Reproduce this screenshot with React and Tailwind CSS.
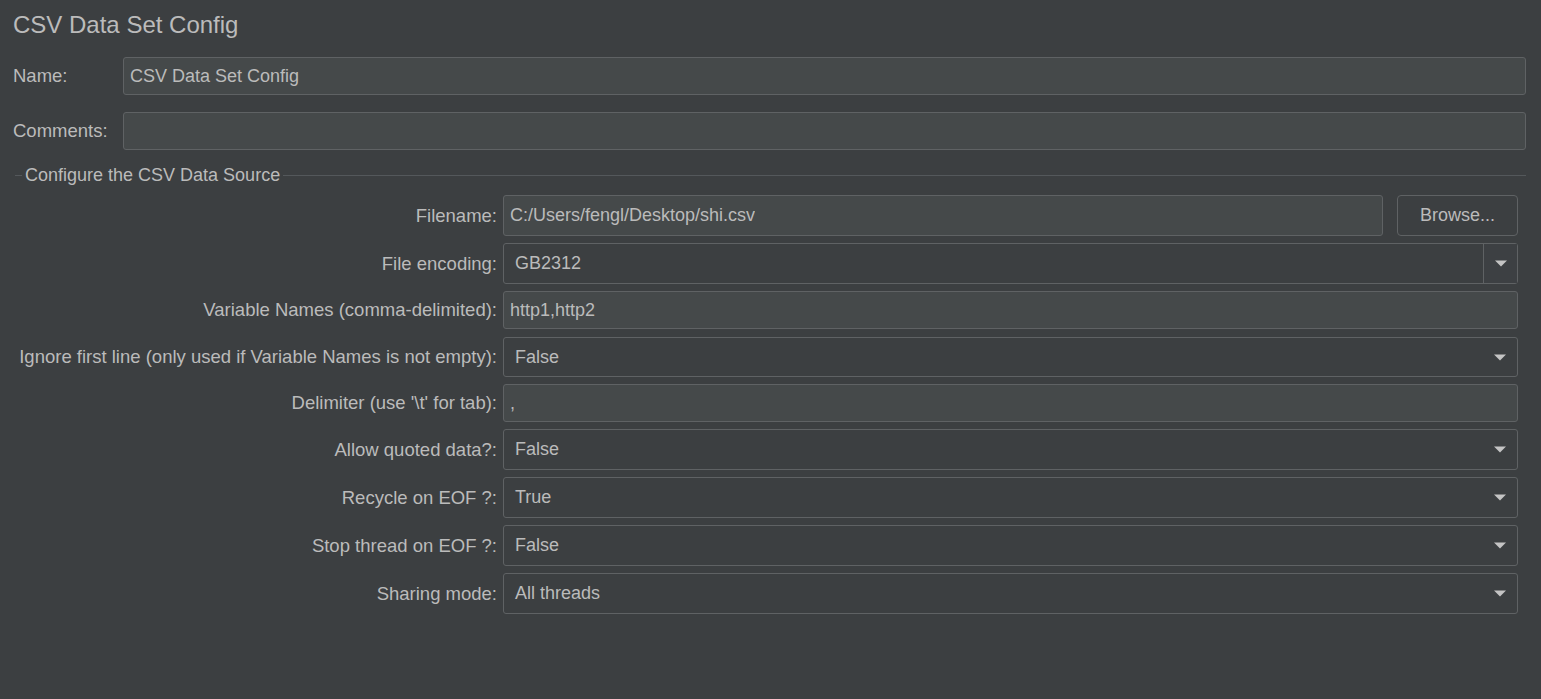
import { useState } from 'react';

const fieldText = 'text-[18px] text-[#bbbbbb]';
const labelText = 'text-[18.5px] text-[#bbbbbb]';

function TextField({ value, height, className = '' }) {
  return (
    <div
      className={`flex items-center rounded-[3px] border border-[#5f6264] bg-[#45494a] px-[6px] ${fieldText} ${className}`}
      style={{ height }}
    >
      <span className="truncate">{value}</span>
    </div>
  );
}

function Arrow() {
  return (
    <svg width="12" height="7" viewBox="0 0 12 7" className="shrink-0">
      <path d="M0 0.5 L12 0.5 L6 6.5 Z" fill="#c4c4c4" />
    </svg>
  );
}

function Combo({ value, height, split }) {
  return (
    <div
      className={`flex flex-1 items-stretch rounded-[3px] border border-[#5f6264] bg-[#3c3f41] ${fieldText}`}
      style={{ height }}
    >
      <div className="flex flex-1 items-center pl-[11px]">{value}</div>
      {split ? (
        <div className="flex w-[34px] items-center justify-center border-l border-[#5f6264] bg-[#3d4043]">
          <Arrow />
        </div>
      ) : (
        <div className="flex w-[34px] items-center justify-center">
          <Arrow />
        </div>
      )}
    </div>
  );
}

function Row({ label, children }) {
  return (
    <div className="flex items-center">
      <div className={`w-[488px] shrink-0 whitespace-nowrap pr-[6px] text-right ${labelText}`}>{label}</div>
      {children}
    </div>
  );
}

export default function App() {
  const [config] = useState({
    name: 'CSV Data Set Config',
    filename: 'C:/Users/fengl/Desktop/shi.csv',
  });

  return (
    <div
      className="min-h-[699px] w-full bg-[#3c3f41] pl-[13px] pr-[15px] text-[#bbbbbb]"
      style={{ fontFamily: '"Liberation Sans", Arial, sans-serif' }}
    >
      {/* Title */}
      <div className="flex h-[50px] items-center text-[24px] text-[#bbbbbb]">CSV Data Set Config</div>

      {/* Name / Comments */}
      <div className="mt-[7px] flex flex-col gap-[17px]">
        <div className="flex items-center">
          <div className={`w-[110px] shrink-0 ${labelText}`}>Name:</div>
          <TextField value={config.name} height={38} className="flex-1" />
        </div>
        <div className="flex items-center">
          <div className={`w-[110px] shrink-0 ${labelText}`}>Comments:</div>
          <TextField value="" height={38} className="flex-1" />
        </div>
      </div>

      {/* Configure the CSV Data Source */}
      <div className="ml-[2px] mt-[13px]">
        <div className="flex h-[24px] items-center">
          <div className="h-px w-[7px] bg-[#54585b]" />
          <span className={`px-[3px] ${fieldText}`}>Configure the CSV Data Source</span>
          <div className="h-px flex-1 bg-[#54585b]" />
        </div>

        <div className="mr-[8px] mt-[8px] flex flex-col gap-[7px]">
          <Row label="Filename:">
            <TextField value={config.filename} height={41} className="flex-1" />
            <button
              className={`ml-[14px] h-[41px] w-[121px] rounded-[4px] border border-[#5f6264] bg-[#3c3f41] ${fieldText}`}
            >
              Browse...
            </button>
          </Row>
          <Row label="File encoding:">
            <Combo value="GB2312" height={41} split />
          </Row>
          <Row label="Variable Names (comma-delimited):">
            <TextField value="http1,http2" height={38} className="flex-1" />
          </Row>
          <div className="mt-px">
            <Row label="Ignore first line (only used if Variable Names is not empty):">
              <Combo value="False" height={40} />
            </Row>
          </div>
          <Row label="Delimiter (use '\t' for tab):">
            <TextField value="," height={38} className="flex-1" />
          </Row>
          <Row label="Allow quoted data?:">
            <Combo value="False" height={41} />
          </Row>
          <Row label="Recycle on EOF ?:">
            <Combo value="True" height={41} />
          </Row>
          <Row label="Stop thread on EOF ?:">
            <Combo value="False" height={41} />
          </Row>
          <Row label="Sharing mode:">
            <Combo value="All threads" height={41} />
          </Row>
        </div>
      </div>
    </div>
  );
}
